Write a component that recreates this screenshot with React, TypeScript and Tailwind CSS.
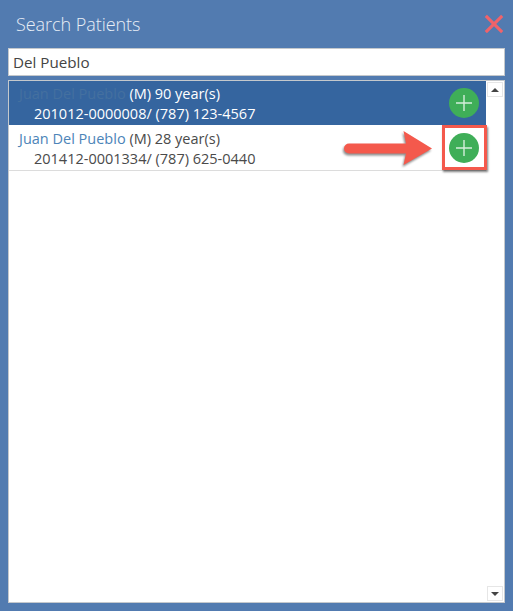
const font = { fontFamily: '"Open Sans", "Noto Sans", sans-serif' }

const patients = [
    { name: "Juan Del Pueblo", info: "(M) 90 year(s)", line: "201012-0000008/ (787) 123-4567", selected: true },
    { name: "Juan Del Pueblo", info: "(M) 28 year(s)", line: "201412-0001334/ (787) 625-0440", selected: false },
]

const AddButton = () => (
    <div className="size-[30px] rounded-full bg-[#3fae58] flex items-center justify-center">
        <svg width="18" height="18" viewBox="0 0 18 18" fill="none" stroke="#d5eedb" strokeWidth="1.4">
            <path d="M9 1v16M1 9h16" />
        </svg>
    </div>
)

const PatientRow = ({ name, info, line, selected }: (typeof patients)[number]) => (
    <div className={`relative pl-[10px] text-[14.5px] leading-[20px] ${selected ? "h-[44px] pt-[3px] bg-[#35659f] text-white" : "h-[46px] pt-[4px] bg-white text-[#4a4a4a] border-b border-[#dcdcdc]"}`}>
        <div>
            <span className={selected ? "text-[#44709f]" : "text-[#4c84b8]"}>{name}</span> {info}
        </div>
        <div className="pl-[15px]">{line}</div>
        <div className={`absolute right-[7px] ${selected ? "top-[7px]" : "top-[8px]"}`}>
            <AddButton />
        </div>
    </div>
)

const App = () => {
    return (
        <div style={font} className="relative w-[513px] h-[611px] overflow-hidden bg-[#527bb0] flex flex-col px-2 pb-2">
            <div className="h-[48px] flex items-center justify-between pl-2">
                <h1 className="text-[18px] font-light text-[#e8eef6] tracking-[-0.05px]">Search Patients</h1>
                <svg width="20" height="20" viewBox="0 0 22 22" className="mr-[1px]" stroke="#f0636a" strokeWidth="3.4">
                    <path d="M2 2l18 18M20 2L2 20" />
                </svg>
            </div>
            <div className="h-[28px] bg-white border border-[#c4c8cc] pl-1 pt-[1px] flex items-center text-[15.2px] text-[#444]">
                Del Pueblo
            </div>
            <div className="mt-1 flex-1 min-h-0 bg-white border border-[#c4c8cc] flex">
                <div className="flex-1">
                    {patients.map((p, i) => (
                        <PatientRow key={i} {...p} />
                    ))}
                </div>
                <div className="w-[18px] flex flex-col justify-between p-[1px]">
                    <div className="h-[15px] border border-[#e6e6e6] flex items-center justify-center">
                        <div className="border-x-[4px] border-x-transparent border-b-[4px] border-b-[#444]"></div>
                    </div>
                    <div className="h-[15px] border border-[#e6e6e6] flex items-center justify-center">
                        <div className="border-x-[4px] border-x-transparent border-t-[4px] border-t-[#444]"></div>
                    </div>
                </div>
            </div>
            {/* annotation on top of the screenshot */}
            <div className="absolute left-[442px] top-[125px] w-[45px] h-[45px] border-[3px] border-[#f4594c] shadow-[1px_2px_2px_rgba(0,0,0,0.5)]"></div>
            <svg width="96" height="38" viewBox="0 0 96 38" className="absolute left-[344px] top-[130px] drop-shadow-[-1px_2px_1px_rgba(0,0,0,0.45)]">
                <path d="M5 13.5H62L59.5 1L88 18.5L59.5 35L62 23.5H5a5 5 0 0 1 0-10z" fill="#f4594c" />
            </svg>
        </div>
    )
}

export default App
